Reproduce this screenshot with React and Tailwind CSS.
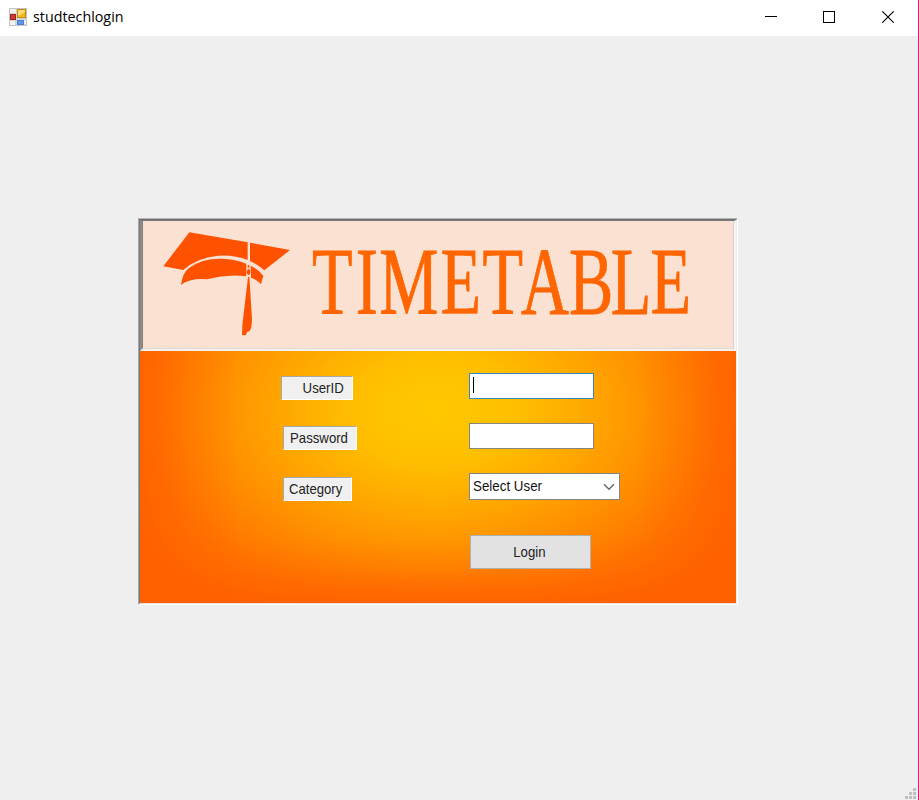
import React from "react";

const AppIcon = () => (
  <svg width="18" height="18" viewBox="0 0 18 18" className="shrink-0">
    <rect x="0.5" y="0.5" width="17" height="17" fill="#d4d4d4" stroke="#c4c4c4" />
    <path d="M1 1h6v4H1zM1 13h5v4H1zM15 12h2v4h-2z" fill="#f0f0f0" />
    <rect x="1.5" y="6.5" width="5" height="5" fill="#c83c32" stroke="#a3241d" />
    <rect x="8.5" y="1.5" width="8" height="8" fill="#f2b820" stroke="#c08a10" />
    <path d="M9 2h7v2l-7 4z" fill="#ffdc6c" />
    <rect x="8.5" y="12.5" width="6" height="4" fill="#5f97ea" stroke="#4a80d8" />
  </svg>
);

const Cap = () => (
  <svg width="130" height="108" viewBox="96 60 390 324" className="shrink-0">
    <g fill="#ff5200">
      <path d="M178 67L353 97V150Q310 133 264 137Q200 143 160 180L100 169Z" />
      <path d="M360 98L480 120L403 181Q385 165 360 153Z" />
      <path d="M153 225Q157 189 177 174Q215 145 275 146Q318 147 349 161V199Q290 192 231 208Q180 204 153 225Z" />
      <path d="M362 167Q386 178 400 197L393 222Q382 210 363 203Z" />
      <path d="M353 165h5v8h-5zM356 176q6 2 5 10q0 8-5 10q-6-2-6-10q0-8 6-10z" />
      <path d="M354 201H358L366 325Q366 355 359 363L351 366L348 376L336 375L337 345Z" />
    </g>
  </svg>
);

const Label = ({ className, textClass, children }) => (
  <div
    className={
      "flex h-6 items-center border border-t-[#a8a8a8] border-l-[#a8a8a8] border-r-white border-b-white bg-[#f0f0f0] pb-px text-[15px] leading-none " +
      className
    }
  >
    <span className={textClass}>{children}</span>
  </div>
);

export default function App() {
  return (
    <div className="flex h-[800px] w-[919px] flex-col overflow-hidden border-r border-[#e5177b] bg-[#efefef] font-['Liberation_Sans',sans-serif] text-[#222]">
      <header className="flex h-9 shrink-0 items-center bg-white pl-[9px]">
        <div className="pb-[3px]">
          <AppIcon />
        </div>
        <span className="ml-[6px] pb-px font-['Open_Sans','Noto_Sans',sans-serif] text-[14.3px] leading-none text-black">
          studtechlogin
        </span>
        <div className="mr-[24px] ml-auto flex items-center gap-[46px] pb-[2px]">
          <svg width="12" height="12" viewBox="0 0 12 12" shapeRendering="crispEdges">
            <path d="M0 5.5h12" stroke="#000" />
          </svg>
          <svg width="12" height="12" viewBox="0 0 12 12" shapeRendering="crispEdges">
            <rect x="0.5" y="0.5" width="11" height="11" fill="none" stroke="#000" />
          </svg>
          <svg width="12" height="12" viewBox="0 0 12 12" className="ml-px">
            <path d="M0.2 0.2L11.8 11.8M11.8 0.2L0.2 11.8" stroke="#000" strokeWidth="1.1" />
          </svg>
        </div>
      </header>

      <main className="flex grow flex-col pt-[182px] pl-[138px]">
        <div className="h-[387px] w-[600px] border border-t-[#b4b4b4] border-r-white border-b-white border-l-[#a8a8a8]">
          <div className="flex h-full flex-col border border-t-[#6f6f6f] border-r-[#ececec] border-b-[#e6e0dc] border-l-[#777777] bg-[linear-gradient(to_right,#ff6000cc,#ff600040_50px,#ff600000_100px),linear-gradient(to_left,#ff6000cc,#ff600040_50px,#ff600000_100px),linear-gradient(to_top,#ff6000cc,#ff600030_35px,#ff600000_65px),radial-gradient(ellipse_365px_240px_at_296px_190px,#ffc800_0%,#ffbf00_22%,#ffa700_42%,#ff8a00_64%,#ff7200_82%,#ff6200_100%)]">
            <section className="h-[131px] shrink-0 border-t border-r-2 border-b-2 border-l-2 border-t-[#777777] border-r-[#f6f6f6] border-b-[#f4f2f0] border-l-[#8c8c8c]">
              <div className="flex h-full border-r border-b border-l border-r-[#dccfc9] border-b-[#e2d8d4] border-l-[#8c7f78] bg-[#fae1d2] pt-[9px] pl-[19px]">
                <Cap />
                <svg width="400" height="112" className="ml-[18px] shrink-0 overflow-visible">
                  <text
                    x="3 65.5 99 186.5 246.5 301.5 370 429.5 486.5"
                    y="84.3"
                    transform="scale(0.7 1)"
                    fill="#ff6500"
                    stroke="#ff6500"
                    strokeWidth="0.8"
                    className="font-['Liberation_Serif',serif] text-[95px]"
                  >
                    TIMETABLE
                  </text>
                </svg>
              </div>
            </section>

            <section className="flex grow pl-[141px]">
              <div className="flex w-[188px] flex-col items-start pt-[25px]">
                <Label className="w-[72px] justify-end pr-[8px]" textClass="origin-right scale-x-[0.88]">UserID</Label>
                <Label className="mt-[26px] ml-[2px] w-[74px] pl-[6px]" textClass="origin-left scale-x-[0.88]">Password</Label>
                <Label className="mt-[27px] ml-[2px] w-[69px] pl-[5px]" textClass="origin-left scale-x-[0.875]">Category</Label>
              </div>
              <div className="flex flex-col items-start pt-[22px]">
                <div className="flex h-[26px] w-[125px] items-start border border-[#3487c4] bg-white pt-[3px] pl-[3px]">
                  <div className="h-4 w-px bg-black" />
                </div>
                <div className="mt-[24px] h-[26px] w-[125px] border border-[#858585] bg-white" />
                <div className="mt-[24px] flex h-[27px] w-[151px] items-center justify-between border border-[#858585] bg-white pr-[4px] pb-[2px] pl-[3px] text-[15px] leading-none text-[#111]">
                  <span className="origin-left scale-x-[0.89]">Select User</span>
                  <svg width="12" height="8" viewBox="0 0 12 8" className="mt-[3px] shrink-0">
                    <path d="M1 1.2L6 6.2L11 1.2" fill="none" stroke="#666" strokeWidth="1.4" />
                  </svg>
                </div>
                <button className="mt-[35px] ml-px flex h-[34px] w-[121px] items-center justify-center border border-[#b0b0b0] bg-[#e2e2e2] pr-[2px] pb-px text-[15px] leading-none">
                  <span className="scale-x-[0.88]">Login</span>
                </button>
              </div>
            </section>
          </div>
        </div>
      </main>

      <div className="flex h-[12px] shrink-0 justify-end pr-[2px]">
        <svg width="12" height="12" viewBox="0 0 12 12" shapeRendering="crispEdges">
          <path
            d="M9 0h3v3h-3zM9 4h3v3h-3zM5 4h3v3h-3zM9 8h3v3h-3zM5 8h3v3h-3zM1 8h3v3h-3z"
            fill="#bfbfbf"
          />
        </svg>
      </div>
    </div>
  );
}
